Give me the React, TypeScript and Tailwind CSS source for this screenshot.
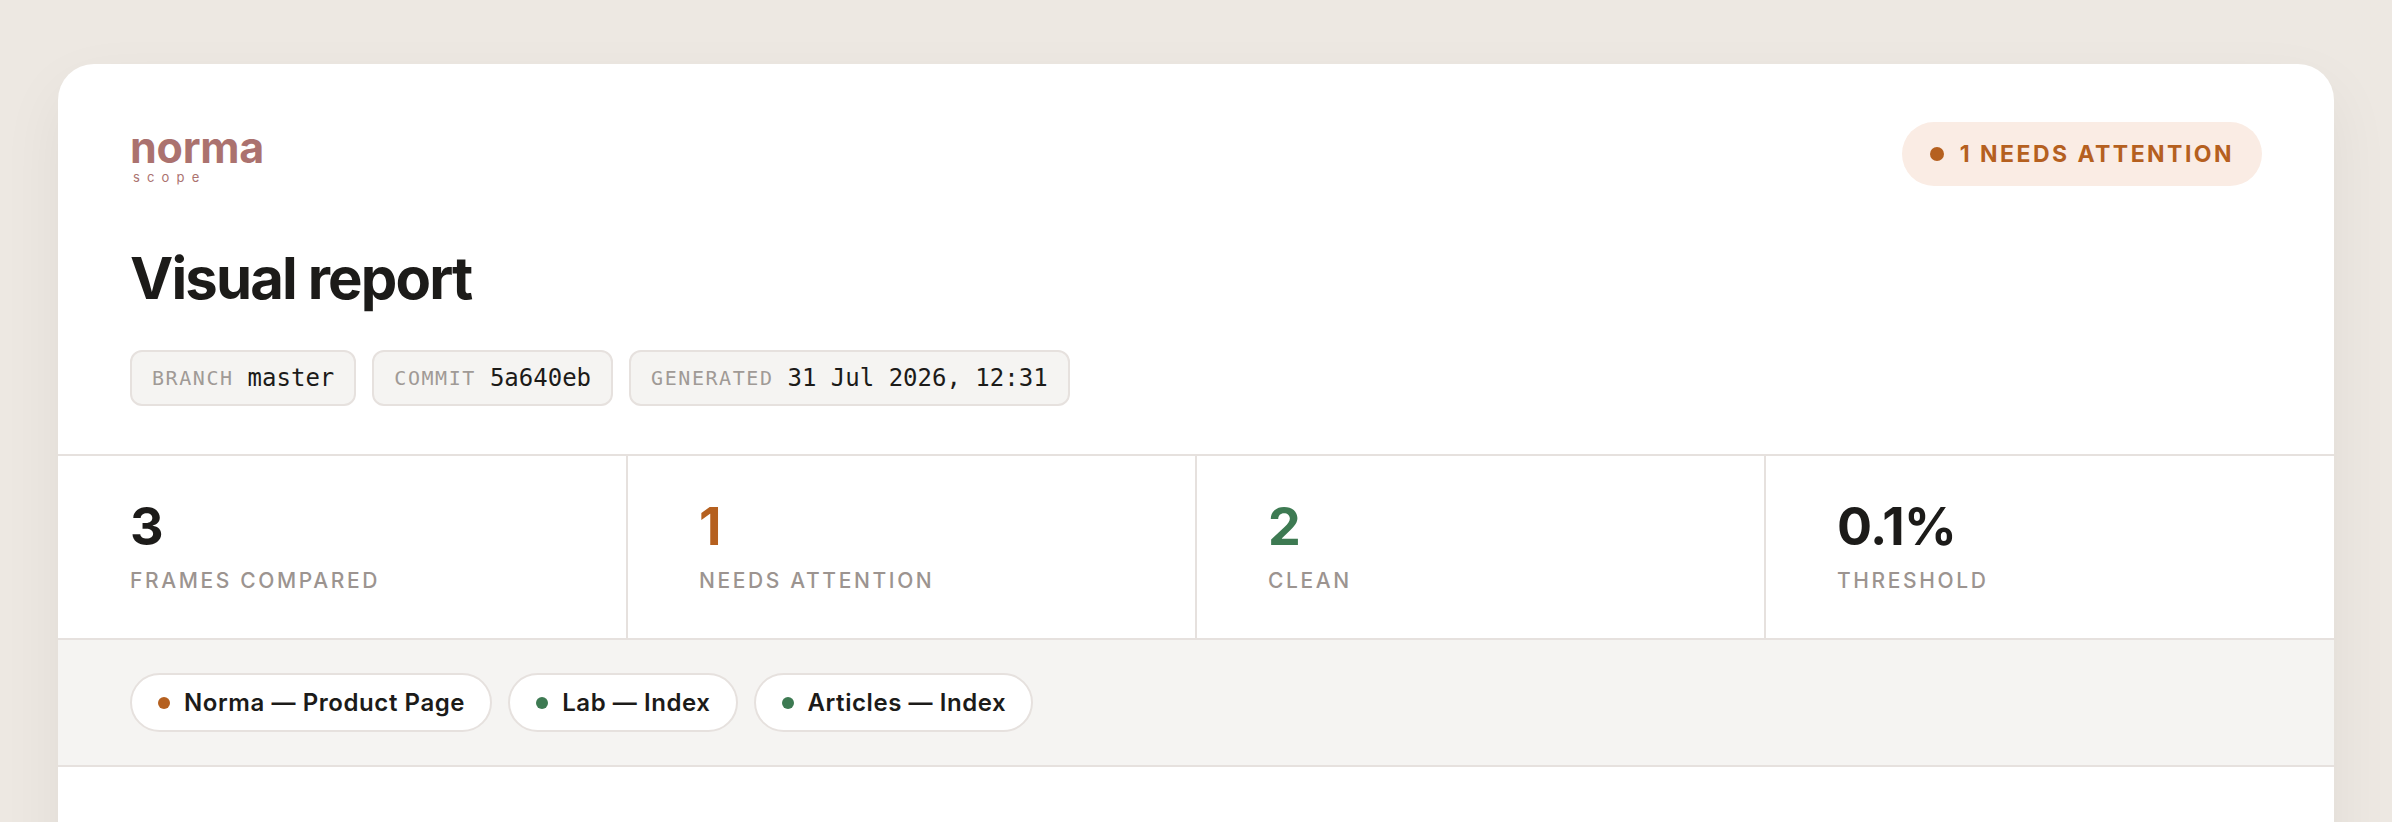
const SANS = "font-['Inter',sans-serif]";

const meta = [
  { label: "BRANCH", value: "master" },
  { label: "COMMIT", value: "5a640eb" },
  { label: "GENERATED", value: "31 Jul 2026, 12:31" },
];

const stats = [
  { value: "3", label: "FRAMES COMPARED", color: "text-[#1c1b19]" },
  { value: "1", label: "NEEDS ATTENTION", color: "text-[#b5601f]" },
  { value: "2", label: "CLEAN", color: "text-[#3d7a52]" },
  { value: "0.1%", label: "THRESHOLD", color: "text-[#1c1b19]" },
];

const frames = [
  { name: "Norma — Product Page", dot: "bg-[#b5601f]" },
  { name: "Lab — Index", dot: "bg-[#3d7a52]" },
  { name: "Articles — Index", dot: "bg-[#3d7a52]" },
];

export default function App() {
  return (
    <div className={`h-[822px] overflow-hidden bg-[#ede8e2] px-[58px] pt-[64px] ${SANS}`}>
      <div className="h-[900px] rounded-[36px] bg-white shadow-[0_24px_64px_rgba(0,0,0,0.06)]">
        <header className="px-[72px] pt-[58px]">
          <div className="flex items-start justify-between">
            <div className="text-[#ab726f]">
              <div className="text-[43px] leading-[50px] font-bold tracking-[-0.005em]">norma</div>
              <div className="-mt-[2px] pl-[3px] text-[13px] leading-[14px] tracking-[0.55em]">scope</div>
            </div>
            <div className="flex h-[64px] items-center gap-[16px] rounded-full bg-[#faece4] px-[28px] text-[23px] font-bold tracking-[0.107em] text-[#b5601f]">
              <span className="h-[14px] w-[14px] rounded-full bg-[#b5601f]" />
              1 NEEDS ATTENTION
            </div>
          </div>
          <h1 className="mt-[56px] text-[58px] leading-[72px] font-bold tracking-[-0.032em] text-[#1c1b19]">
            Visual report
          </h1>
          <div className="mt-[36px] flex gap-[16px] pb-[48px] font-['DejaVu_Sans_Mono',monospace]">
            {meta.map((m) => (
              <div
                key={m.label}
                className="flex h-[56px] items-center gap-[14px] rounded-[12px] border-2 border-[#e6e1de] bg-[#f5f4f2] px-[20px] text-[24px]"
              >
                <span className="text-[20px] tracking-[0.078em] text-[#a09a96]">{m.label}</span>
                <span className="text-[#1c1b19]">{m.value}</span>
              </div>
            ))}
          </div>
        </header>

        <div className="grid grid-cols-[570px_569px_569px_1fr] border-y-2 border-[#e6e1de]">
          {stats.map((s) => (
            <div key={s.label} className="h-[182px] border-r-2 border-[#e6e1de] pt-[37px] pl-[72px] last:border-r-0 not-first:pl-[71px]">
              <div className={`text-[52px] leading-[68px] font-bold tracking-[-0.01em] ${s.color}`}>{s.value}</div>
              <div className="mt-[6px] text-[21px] leading-[28px] font-medium tracking-[0.125em] text-[#9c9490]">{s.label}</div>
            </div>
          ))}
        </div>

        <nav className="flex h-[127px] items-center gap-[16px] border-b-2 border-[#e6e1de] bg-[#f5f4f2] px-[72px]">
          {frames.map((f) => (
            <div
              key={f.name}
              className="flex h-[59px] items-center gap-[14px] rounded-full border-2 border-[#e6e1de] bg-white pr-[25px] pl-[26px] text-[24px] font-semibold tracking-[0.024em] text-[#1c1b19]"
            >
              <span className={`h-[12px] w-[12px] rounded-full ${f.dot}`} />
              {f.name}
            </div>
          ))}
        </nav>
      </div>
    </div>
  );
}
